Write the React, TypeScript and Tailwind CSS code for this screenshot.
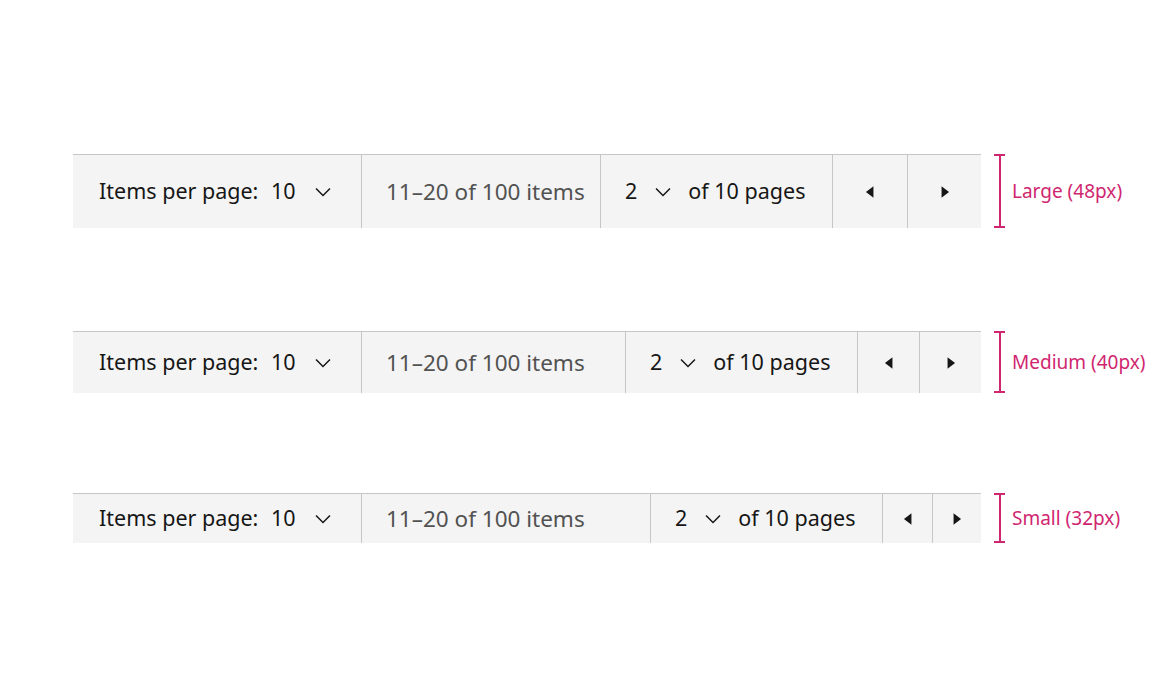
import React from "react";

const FONT = { fontFamily: '"Noto Sans", "Open Sans", Arial, sans-serif' };

function Chevron() {
  return (
    <svg width="24" height="24" viewBox="0 0 16 16" fill="#161616">
      <path d="M8 11L3 6 3.7 5.3 8 9.6 12.3 5.3 13 6z" />
    </svg>
  );
}

function CaretLeft() {
  return (
    <svg width="24" height="24" viewBox="0 0 16 16" fill="#161616">
      <path d="M10.3 11.8L5.3 8 10.3 4.2z" />
    </svg>
  );
}

function CaretRight() {
  return (
    <svg width="24" height="24" viewBox="0 0 16 16" fill="#161616">
      <path d="M5.7 4.2L10.7 8 5.7 11.8z" />
    </svg>
  );
}

type Size = "lg" | "md" | "sm";

function Bracket({ size }: { size: Size }) {
  const h = size === "lg" ? "h-[74px]" : size === "md" ? "h-[62px]" : "h-[50px]";
  return (
    <div className={`flex flex-col items-center w-[11px] ml-[13px] ${h}`}>
      <div className="h-[2px] w-[11px] bg-[#d02670]" />
      <div className="flex-1 w-[2px] bg-[#d02670]" />
      <div className="h-[2px] w-[11px] bg-[#d02670]" />
    </div>
  );
}

function Row({ size, label }: { size: Size; label: string }) {
  const h = size === "lg" ? "h-[74px]" : size === "md" ? "h-[62px]" : "h-[50px]";
  const b1 = size === "lg" ? "w-[75px]" : size === "md" ? "w-[62px]" : "w-[50px]";
  const b2 = size === "lg" ? "w-[74px]" : size === "md" ? "w-[62px]" : "w-[49px]";
  return (
    <div className="flex items-center">
      <div className={`flex w-[908px] ${h} bg-[#f4f4f4] border-t border-[#c6c6c6] text-[21.5px] text-[#161616]`}>
        <div className="flex items-center w-[288px] pl-[26px] pr-[32px]">
          <span>Items per page:</span>
          <div className="ml-auto flex items-center justify-between w-[58px]">
            <span>10</span>
            <span className="mr-[-6px]">
              <Chevron />
            </span>
          </div>
        </div>
        <div className="flex flex-1 items-center border-l border-[#c6c6c6] pl-[24px] text-[#525252] text-[22.5px]">
          11–20 of 100 items
        </div>
        <div className="flex items-center w-[232px] border-l border-[#c6c6c6] pl-[24px]">
          <span>2</span>
          <span className="ml-[14px]">
            <Chevron />
          </span>
          <span className="ml-[13px]">of 10 pages</span>
        </div>
        <div className={`flex items-center justify-center ${b1} border-l border-[#c6c6c6]`}>
          <CaretLeft />
        </div>
        <div className={`flex items-center justify-center ${b2} border-l border-[#c6c6c6]`}>
          <CaretRight />
        </div>
      </div>
      <Bracket size={size} />
      <span className="ml-[7px] text-[19px] text-[#d02670]">{label}</span>
    </div>
  );
}

export default function App() {
  return (
    <div className="w-[1152px] h-[695px] bg-white pl-[73px] pt-[154px] flex flex-col" style={FONT}>
      <Row size="lg" label="Large (48px)" />
      <div className="mt-[103px]">
        <Row size="md" label="Medium (40px)" />
      </div>
      <div className="mt-[100px]">
        <Row size="sm" label="Small (32px)" />
      </div>
    </div>
  );
}
